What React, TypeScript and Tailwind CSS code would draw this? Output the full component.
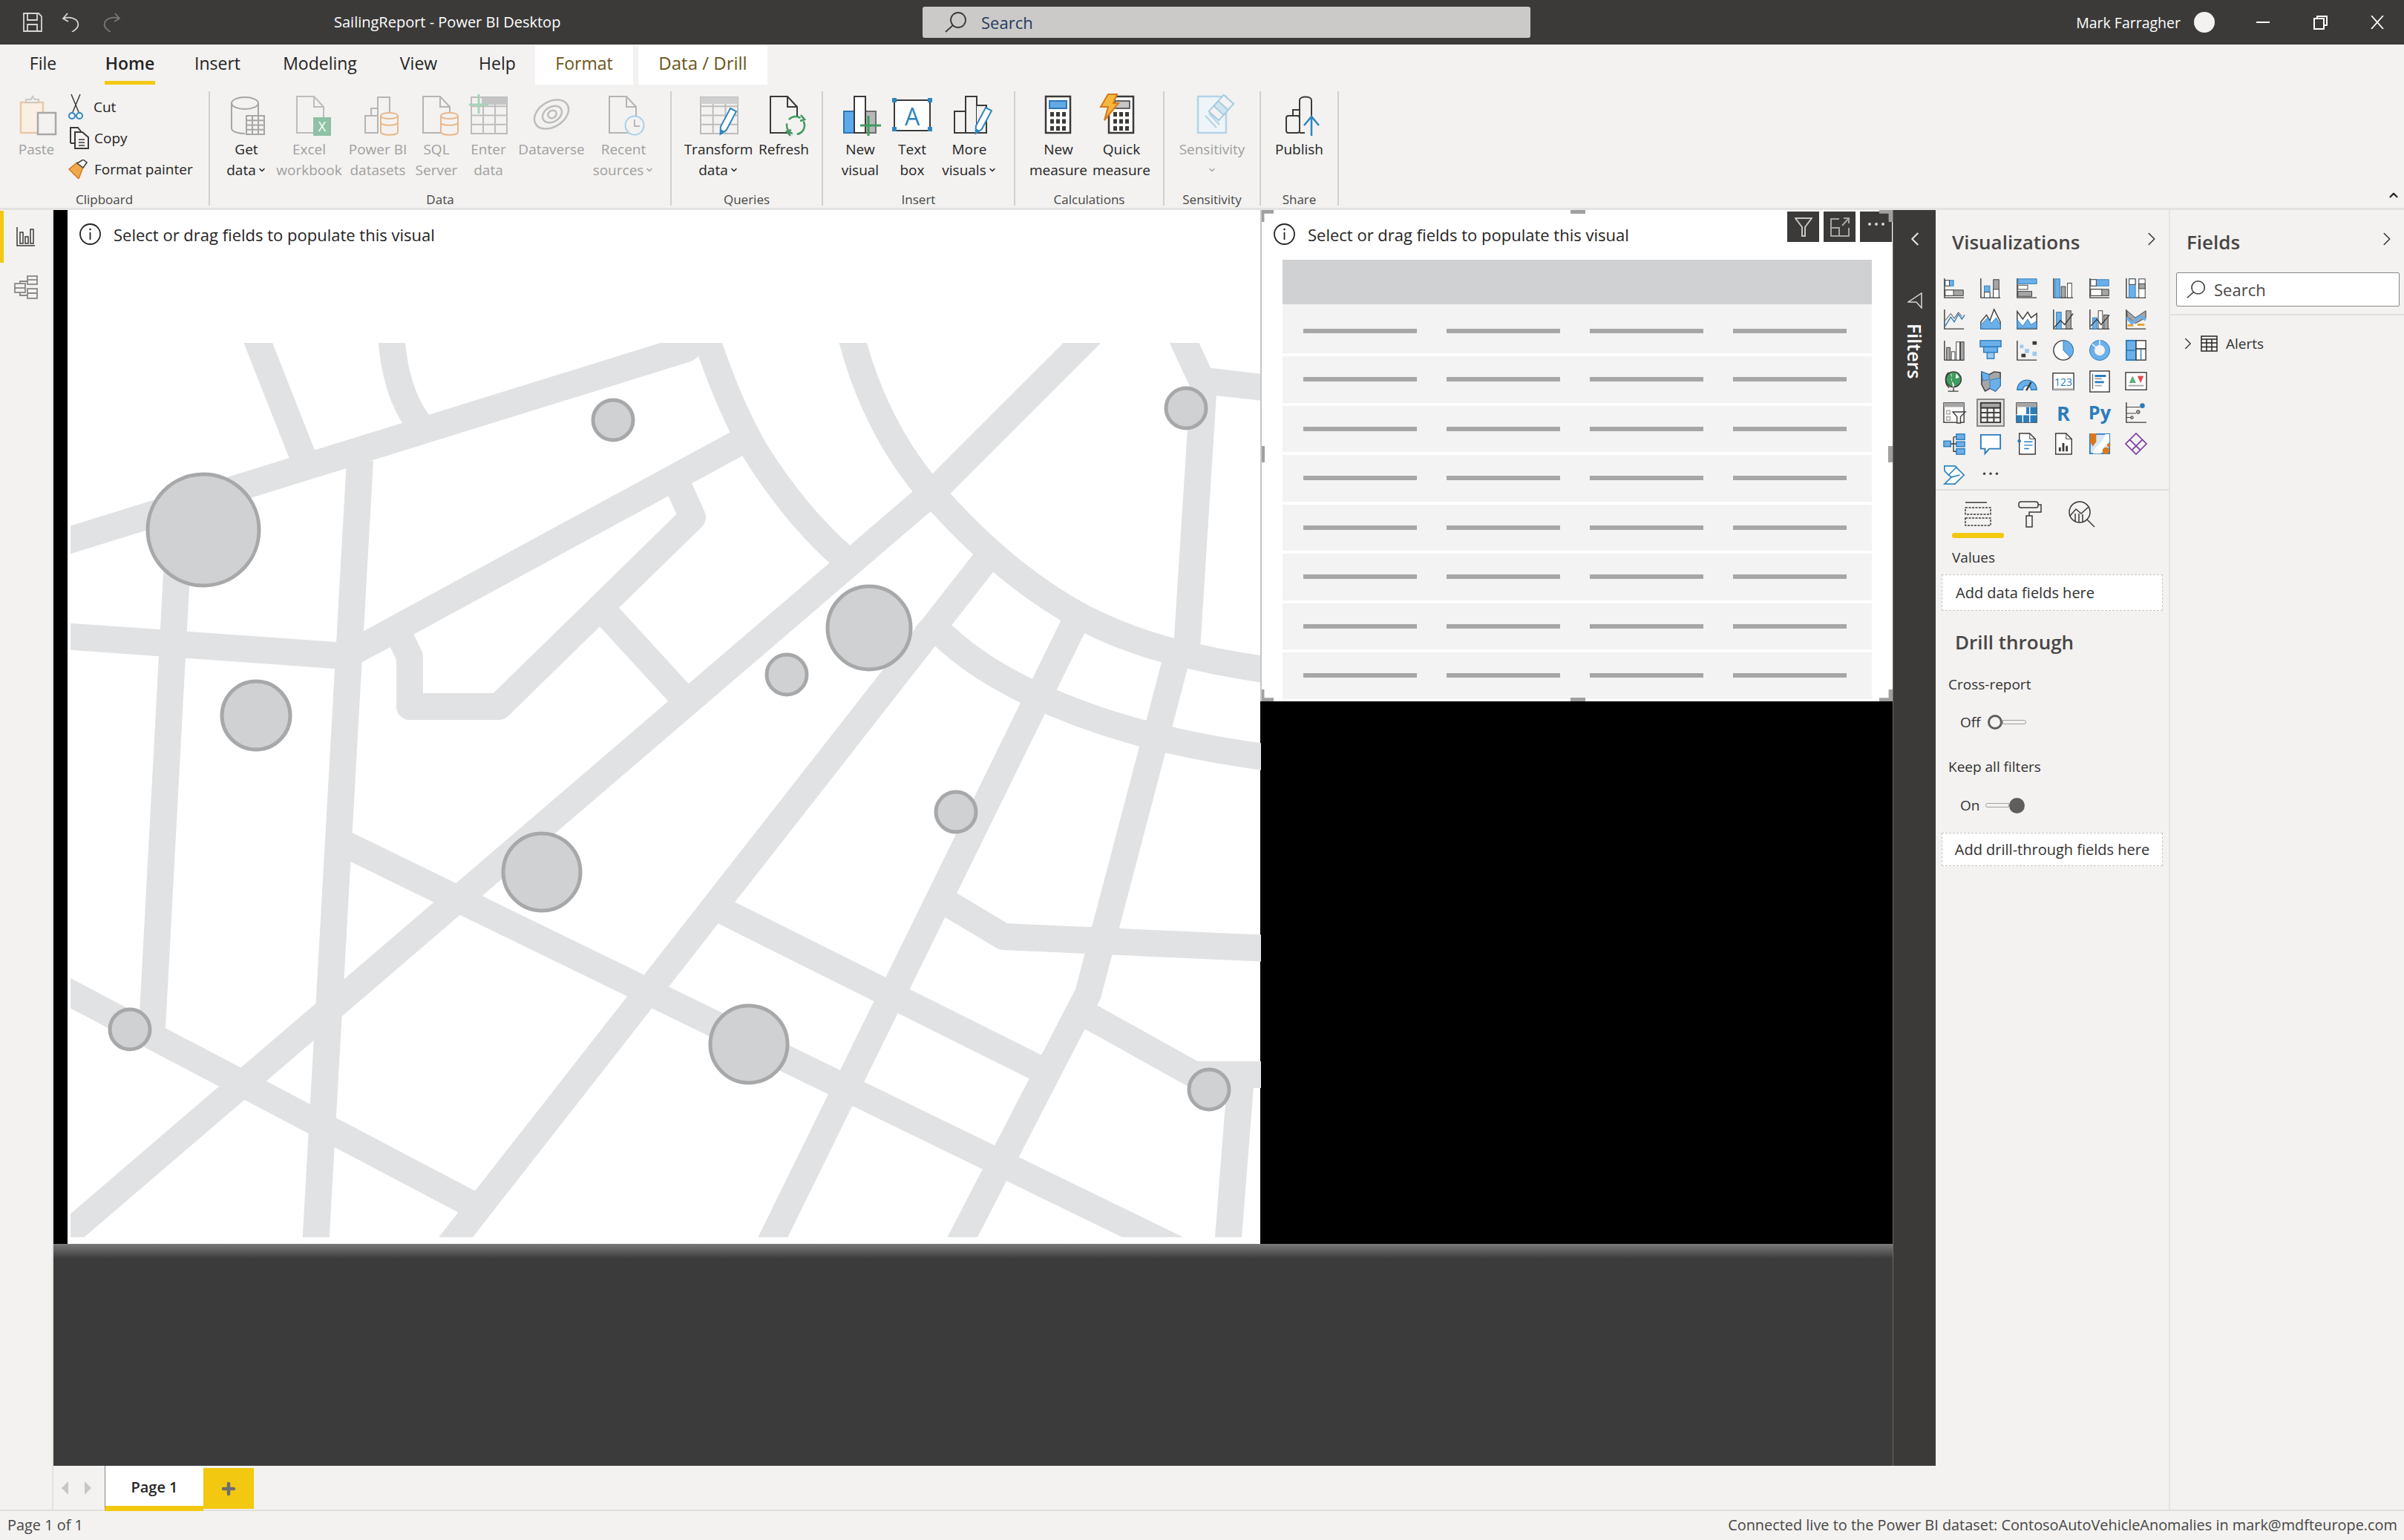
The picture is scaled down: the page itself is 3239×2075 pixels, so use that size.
import type { ReactNode } from 'react'
import { ChevronLeft, ChevronRight, ChevronDown, ChevronUp, Plus } from 'lucide-react'

const FONT = "font-['Open_Sans','Noto_Sans',sans-serif]"

// ---- small shared svg bits ----
function Ico({ children, size = 54 }: { children: ReactNode; size?: number }) {
  return (
    <svg width={size} height={size} viewBox={`0 0 ${size} ${size}`} fill="none" className="overflow-visible shrink-0">
      {children}
    </svg>
  )
}

const page = (x: number) => `M${x} 1H${x + 23}L${x + 36} 15V50H${x}Z M${x + 23} 1V15H${x + 36}`

function Cyl({ x, y, w, h, c }: { x: number; y: number; w: number; h: number; c: string }) {
  return (
    <g stroke={c} strokeWidth="2" fill="#f3f2f1">
      <path d={`M${x} ${y + 4}V${y + h - 4}C${x} ${y + h + 1} ${x + w} ${y + h + 1} ${x + w} ${y + h - 4}V${y + 4}`} />
      <ellipse cx={x + w / 2} cy={y + 4} rx={w / 2} ry="4" />
      <path d={`M${x} ${y + h / 2 - 2}C${x} ${y + h / 2 + 3} ${x + w} ${y + h / 2 + 3} ${x + w} ${y + h / 2 - 2}`} fill="none" />
    </g>
  )
}

function TableGrid({ x, y, w, h, c, cols = 3, rows = 4 }: { x: number; y: number; w: number; h: number; c: string; cols?: number; rows?: number }) {
  const vs = Array.from({ length: cols - 1 }, (_, i) => x + ((i + 1) * w) / cols)
  const hs = Array.from({ length: rows - 1 }, (_, i) => y + ((i + 1) * h) / rows)
  return (
    <g stroke={c} strokeWidth="2">
      <rect x={x} y={y} width={w} height={h} fill="#f3f2f1" />
      {vs.map((v) => (
        <path key={v} d={`M${v} ${y}V${y + h}`} />
      ))}
      {hs.map((v) => (
        <path key={v} d={`M${x} ${v}H${x + w}`} />
      ))}
    </g>
  )
}

function Calc({ x, c = '#3b3a39' }: { x: number; c?: string }) {
  const dots = []
  for (let r = 0; r < 3; r++) for (let k = 0; k < 3; k++) dots.push(<rect key={`${r}${k}`} x={x + 6 + k * 8} y={22 + r * 9.5} width="5" height="6" fill={c} />)
  return (
    <g>
      <rect x={x} y="1" width="33" height="49" fill="#fff" stroke={c} strokeWidth="2.5" />
      {dots}
    </g>
  )
}

const pencil = (x: number, y: number) => (
  <g transform={`translate(${x} ${y}) rotate(28)`}>
    <path d="M0 0H9V28L4.500 37L0 28Z" fill="#fff" stroke="#2e86c1" strokeWidth="2" />
    <path d="M4.500 37L1.500 31H7.500Z" fill="#2e86c1" />
  </g>
)

// ---- ribbon icons, each in a 54px box under its label ----
const ribbonIcons: Record<string, ReactNode> = {
  paste: (
    <Ico>
      <path d="M6 9H36V50H6Z" fill="#f9efe4" stroke="#e9c9a4" strokeWidth="2.500" />
      <path d="M13 9V5H20L22 1L25 5H30V9Z" fill="#f3f2f1" stroke="#cfc8c0" strokeWidth="2" />
      <rect x="29" y="23" width="24" height="29" fill="#f3f2f1" stroke="#a8a8a8" strokeWidth="2.500" />
    </Ico>
  ),
  getdata: (
    <Ico>
      <g stroke="#a6a6a6" strokeWidth="2">
        <path d="M7 10V44C7 48 15 51 25 51" />
        <path d="M43 10V26" />
        <ellipse cx="25" cy="10" rx="18" ry="8" fill="#f3f2f1" />
      </g>
      <TableGrid x={27} y={27} w={24} h={25} c="#a6a6a6" cols={3} rows={4} />
    </Ico>
  ),
  excel: (
    <Ico>
      <path d={page(10)} stroke="#bdbdbd" strokeWidth="2" fill="#f3f2f1" />
      <rect x="32" y="29" width="24" height="25" fill="#8ec1a6" />
      <text x="44" y="48" fill="#fff" fontSize="18" textAnchor="middle" fontFamily="Open Sans">X</text>
    </Ico>
  ),
  pbi: (
    <Ico>
      <g stroke="#b5b5b5" strokeWidth="2" fill="#f3f2f1">
        <path d="M27 30V2H43V30" />
        <path d="M18 27V17H27" />
        <rect x="10" y="27" width="17" height="23" />
      </g>
      <Cyl x={31} y={23} w={23} h={30} c="#eab88a" />
    </Ico>
  ),
  sql: (
    <Ico>
      <path d={page(9)} stroke="#b5b5b5" strokeWidth="2" fill="#f3f2f1" />
      <Cyl x={33} y={23} w={23} h={30} c="#eab88a" />
    </Ico>
  ),
  enter: (
    <Ico>
      <TableGrid x={4} y={2} w={48} h={49} c="#bdbdbd" cols={3} rows={4} />
      <rect x="18" y="2" width="34" height="10" fill="#c4c4c4" />
      <path d="M14 -2V24M1 12H27" stroke="#a5d3b8" strokeWidth="3" />
    </Ico>
  ),
  dataverse: (
    <Ico>
      <g stroke="#bdbdbd" strokeWidth="2.500">
        <ellipse cx="27" cy="25" rx="25" ry="17" transform="rotate(-32 27 25)" />
        <ellipse cx="28" cy="25" rx="14" ry="10" transform="rotate(-32 28 25)" />
        <ellipse cx="28" cy="25" rx="6" ry="5" transform="rotate(-32 28 25)" />
      </g>
    </Ico>
  ),
  recent: (
    <Ico>
      <path d={page(8)} stroke="#b5b5b5" strokeWidth="2" fill="#f3f2f1" />
      <circle cx="42" cy="40" r="12.500" stroke="#a9cfe9" strokeWidth="2" fill="#f3f2f1" />
      <path d="M42 32V41H49" stroke="#a6a6a6" strokeWidth="1.500" />
    </Ico>
  ),
  transform: (
    <Ico>
      <TableGrid x={3} y={2} w={50} h={49} c="#bdbdbd" cols={3} rows={4} />
      <rect x="3" y="2" width="50" height="9" fill="#cfcfcf" />
      {pencil(43, 17)}
    </Ico>
  ),
  refresh: (
    <Ico>
      <path d={page(9)} stroke="#3b3a39" strokeWidth="2" fill="#f3f2f1" />
      <g stroke="#3f9b5f" strokeWidth="2.500">
        <circle cx="43" cy="40" r="12" fill="#f3f2f1" strokeDasharray="17 6" />
        <path d="M50 26L55 32L49 34" />
        <path d="M36 54L31 48L37 46" />
      </g>
    </Ico>
  ),
  newvisual: (
    <Ico>
      <rect x="20" y="21" width="28" height="29" fill="#b8b8b8" stroke="#6d6d6d" strokeWidth="2" />
      <rect x="5" y="21" width="14" height="29" fill="#5ea8ec" stroke="#2e75b6" strokeWidth="2" />
      <rect x="19" y="1" width="15" height="49" fill="#fff" stroke="#3b3a39" strokeWidth="2" />
      <path d="M38 27V54M27 40H55" stroke="#3f9b5f" strokeWidth="3" />
    </Ico>
  ),
  textbox: (
    <Ico>
      <rect x="3" y="6" width="48" height="41" fill="#fff" stroke="#3b3a39" strokeWidth="2" />
      {[[0, 3], [48, 3], [0, 42], [48, 42]].map(([x, y]) => (
        <rect key={`${x}${y}`} x={x} y={y} width="6" height="6" fill="#2e86c1" />
      ))}
      <text x="27" y="40" fill="#2e86c1" fontSize="32" textAnchor="middle" fontFamily="Open Sans">A</text>
    </Ico>
  ),
  morevisuals: (
    <Ico>
      <g stroke="#3b3a39" strokeWidth="2" fill="#f3f2f1">
        <rect x="7" y="21" width="15" height="29" />
        <rect x="22" y="1" width="15" height="49" />
        <path d="M37 13H50V50H37" />
      </g>
      {pencil(49, 16)}
    </Ico>
  ),
  newmeasure: (
    <Ico>
      <Calc x={10} />
      <rect x="15" y="7" width="23" height="10" fill="#62a9e6" stroke="#2e75b6" strokeWidth="2" />
    </Ico>
  ),
  quick: (
    <Ico>
      <Calc x={10} />
      <rect x="18" y="7" width="20" height="10" fill="#c6c6c6" stroke="#3b3a39" strokeWidth="1.500" />
      <path d="M9 -2H21L16 10H23L4 33L9 15H-1Z" fill="#f6b73c" stroke="#d9791c" strokeWidth="2" />
    </Ico>
  ),
  sensitivity: (
    <Ico>
      <path d="M8 1H46V50H8Z" fill="#eef4f8" stroke="#b5d3e6" strokeWidth="2.500" />
      <g transform="rotate(42 34 22)" stroke="#a6cde2" strokeWidth="2" fill="#cfe5f1">
        <rect x="25" y="-1" width="18" height="30" fill="#f3f2f1" />
        <rect x="25" y="10" width="18" height="9" />
      </g>
      <path d="M18 27L33 43M23 24L37 39" stroke="#b5d3e6" strokeWidth="2" />
    </Ico>
  ),
  publish: (
    <Ico>
      <g stroke="#3b3a39" strokeWidth="2" fill="#f3f2f1">
        <path d="M27 30V6C27 0 43 0 43 6V30" />
        <path d="M18 27V19H27" />
        <rect x="9" y="27" width="18" height="23" rx="3" />
        <path d="M27 50H34" />
      </g>
      <path d="M43 54V29M33 40L43 28L53 40" stroke="#2e86c1" strokeWidth="2.500" fill="none" />
    </Ico>
  ),
}

function RibbonBtn({ w, icon, lines, disabled, drop }: { w: number; icon: string; lines: string[]; disabled?: boolean; drop?: boolean }) {
  return (
    <div style={{ width: w }} className={`flex flex-col items-center pt-[6px] text-[19px] leading-[28px] ${disabled ? 'text-[#a19f9d]' : 'text-[#252423]'}`}>
      <div className="mb-[4px] h-[54px]">{ribbonIcons[icon]}</div>
      {lines.map((l, i) => (
        <div key={l + i} className="flex items-center whitespace-nowrap">
          {l}
          {drop && i === lines.length - 1 && <ChevronDown className="ml-[2px]" size={12} strokeWidth={3} />}
        </div>
      ))}
    </div>
  )
}

function Group({ w, pl = 0, label, children }: { w: number; pl?: number; label: string; children: ReactNode }) {
  return (
    <div style={{ width: w }} className="relative flex h-[154px] flex-col border-r-2 border-[#d2d0ce]">
      <div style={{ paddingLeft: pl }} className="flex h-[130px]">
        {children}
      </div>
      <div className="h-[24px] pt-[5px] text-center text-[17px] leading-[22px] text-[#484644]">{label}</div>
    </div>
  )
}

function Ribbon() {
  return (
    <div className="relative h-[223px] border-b-[3px] border-[#e4e3e2] bg-[#f3f2f1]">
      <div className="flex h-[54px] text-[23px] text-[#252423]">
        <div className="ml-[8px] flex w-[100px] items-center justify-center pb-[4px]">File</div>
        <div className="relative flex w-[134px] items-center justify-center pb-[4px] font-semibold">
          Home
          <span className="absolute bottom-0 left-[33px] h-[5px] w-[68px] bg-[#f2c811]" />
        </div>
        <div className="flex w-[102px] items-center justify-center pb-[4px]">Insert</div>
        <div className="flex w-[174px] items-center justify-center pb-[4px]">Modeling</div>
        <div className="flex w-[92px] items-center justify-center pb-[4px]">View</div>
        <div className="ml-[10px] flex w-[100px] items-center justify-center pb-[4px]">Help</div>
        <div className="ml-[1px] flex w-[132px] items-center justify-center bg-white pb-[4px] text-[#6b5518]">Format</div>
        <div className="ml-[7px] flex w-[174px] items-center justify-center bg-white pb-[4px] text-[24px] text-[#6b5518]">Data / Drill</div>
      </div>
      <div className="mt-[9px] flex">
        <Group w={283} label="Clipboard">
          <div className="w-[88px]">
            <RibbonBtn w={98} icon="paste" lines={['Paste']} disabled />
          </div>
          <div className="ml-[4px] flex flex-col text-[19px] text-[#252423]">
            <div className="flex h-[42px] items-center gap-[14px]">
              <svg width="20" height="36" viewBox="0 0 20 36" fill="none" className="shrink-0">
                <path d="M4 1L14 25M16 1L6 25" stroke="#3b3a39" strokeWidth="1.500" />
                <circle cx="5" cy="30" r="4" stroke="#2e86c1" strokeWidth="2" />
                <circle cx="15" cy="30" r="4" stroke="#2e86c1" strokeWidth="2" />
              </svg>
              Cut
            </div>
            <div className="flex h-[42px] items-center gap-[7px]">
              <svg width="28" height="30" viewBox="0 0 28 30" fill="none" className="shrink-0">
                <path d="M3 22V1H13L17 6M3 22H8" stroke="#3b3a39" strokeWidth="2" />
                <path d="M9 7H19L27 14V29H9Z" fill="#f3f2f1" stroke="#3b3a39" strokeWidth="2" />
                <path d="M14 17H22M14 21H22M14 25H22" stroke="#3b3a39" strokeWidth="1.500" />
              </svg>
              Copy
            </div>
            <div className="flex h-[42px] items-center gap-[9px]">
              <svg width="26" height="26" viewBox="0 0 26 26" fill="none" className="shrink-0">
                <path d="M1 13L14 26L20 10L12 4Z" fill="#f0a94c" stroke="#d9791c" strokeWidth="1.500" />
                <path d="M12 5L20 11L25 4L20 0Z" fill="#fff" stroke="#3b3a39" strokeWidth="1.500" />
              </svg>
              Format painter
            </div>
          </div>
        </Group>
        <Group w={622} pl={7} label="Data">
          <RibbonBtn w={84} icon="getdata" lines={['Get', 'data']} drop />
          <RibbonBtn w={85} icon="excel" lines={['Excel', 'workbook']} disabled />
          <RibbonBtn w={100} icon="pbi" lines={['Power BI', 'datasets']} disabled />
          <RibbonBtn w={58} icon="sql" lines={['SQL', 'Server']} disabled />
          <RibbonBtn w={82} icon="enter" lines={['Enter', 'data']} disabled />
          <RibbonBtn w={88} icon="dataverse" lines={['Dataverse']} disabled />
          <RibbonBtn w={106} icon="recent" lines={['Recent', 'sources']} disabled drop />
        </Group>
        <Group w={204} pl={16} label="Queries">
          <RibbonBtn w={94} icon="transform" lines={['Transform', 'data']} drop />
          <RibbonBtn w={82} icon="refresh" lines={['Refresh']} />
        </Group>
        <Group w={259} pl={15} label="Insert">
          <RibbonBtn w={70} icon="newvisual" lines={['New', 'visual']} />
          <RibbonBtn w={70} icon="textbox" lines={['Text', 'box']} />
          <RibbonBtn w={84} icon="morevisuals" lines={['More', 'visuals']} drop />
        </Group>
        <Group w={201} pl={16} label="Calculations">
          <RibbonBtn w={84} icon="newmeasure" lines={['New', 'measure']} />
          <RibbonBtn w={86} icon="quick" lines={['Quick', 'measure']} />
        </Group>
        <Group w={130} label="Sensitivity">
          <div className="flex w-[128px] flex-col items-center">
            <RibbonBtn w={128} icon="sensitivity" lines={['Sensitivity']} disabled />
            <ChevronDown className="mt-[8px] text-[#a19f9d]" size={12} strokeWidth={2.5} />
          </div>
        </Group>
        <Group w={105} label="Share">
          <RibbonBtn w={103} icon="publish" lines={['Publish']} />
        </Group>
      </div>
      <ChevronUp className="absolute bottom-[8px] right-[5px] text-[#252423]" size={18} strokeWidth={3} />
    </div>
  )
}

function TitleBar() {
  return (
    <div className="flex h-[60px] items-center bg-[#3b3a39] text-white">
      <div className="flex w-[450px] items-center pl-[31px]">
        <svg width="26" height="26" viewBox="0 0 26 26" fill="none" stroke="#d6d6d6" strokeWidth="1.800">
          <path d="M1 1H21L25 5V25H1Z M6 1V10H19V1 M6 25V16H19V25" />
        </svg>
        <svg className="ml-[26px]" width="26" height="26" viewBox="0 0 26 26" fill="none" stroke="#d6d6d6" strokeWidth="1.800">
          <path d="M8 1L2 8L9 12 M2 8C14 4 24 10 22 18C21 22 17 24 14 26" />
        </svg>
        <svg className="ml-[28px]" width="26" height="26" viewBox="0 0 26 26" fill="none" stroke="#7a7978" strokeWidth="1.800">
          <path d="M18 1L24 8L17 12 M24 8C12 4 2 10 4 18C5 22 9 24 12 26" />
        </svg>
      </div>
      <div className="w-[793px] text-[20px]">SailingReport - Power BI Desktop</div>
      <div className="flex h-[42px] w-[819px] items-center rounded-[3px] bg-[#cbcac9] pl-[30px] text-[22px] text-[#243a5e]">
        <svg width="30" height="28" viewBox="0 0 30 28" fill="none" stroke="#3b3a39" strokeWidth="1.800">
          <circle cx="18" cy="11" r="10" />
          <path d="M11 18L1 27" />
        </svg>
        <span className="ml-[19px]">Search</span>
      </div>
      <div className="flex-1" />
      <div className="pt-[2px] text-[19.500px]">Mark Farragher</div>
      <div className="ml-[18px] size-[28px] rounded-full bg-[#f3f2f1]" />
      <div className="ml-[56px] h-[2px] w-[18px] bg-white" />
      <svg className="ml-[59px]" width="19" height="19" viewBox="0 0 19 19" fill="none" stroke="#fff" strokeWidth="2">
        <path d="M5 4V1H18V13H14" />
        <rect x="1" y="4" width="13" height="14" />
      </svg>
      <svg className="ml-[58px] mr-[27px]" width="18" height="18" viewBox="0 0 18 18" fill="none" stroke="#fff" strokeWidth="1.800">
        <path d="M1 0L17 18M17 0L1 18" />
      </svg>
    </div>
  )
}

// ---- map placeholder ----
const roads = [
  'M80 732L925 470L950 450',
  'M460 887L1000 594',
  'M85 857L480 885',
  'M243 680L205 1385',
  'M485 620L425 1680',
  'M540 860L552 885V952H672L933 697L912 650',
  'M815 825L925 945',
  'M80 1672L1260 660L1470 450',
  'M1330 752L600 1685',
  'M460 1135L1590 1685',
  'M975 1228L1410 1445',
  'M85 1333L640 1625',
  'M1455 825L1035 1680',
  'M1590 868L1466 1339L1290 1680',
  'M1622 515L1598 890',
  'M1590 450L1625 525',
  'M1622 513L1710 523',
  'M1265 1210L1352 1262L1710 1278',
  'M1460 1365L1609 1448H1710',
  'M1672 1450L1654 1680',
  'M343 450L412 625',
  'M527 450C530 500 542 545 570 578',
  'M950 450C968 505 990 560 1017 607C1050 660 1090 710 1135 750',
  'M1146 450C1170 545 1215 625 1269 679C1320 735 1375 783 1439 821C1480 845 1525 863 1573 876C1620 888 1665 897 1710 903',
  'M1245 832L1274 859C1310 892 1345 912 1385 932C1440 958 1490 975 1539 988C1595 1003 1650 1013 1710 1021',
]

const bubbles = [
  [274, 714, 75],
  [826, 566, 27],
  [345, 964, 46],
  [1598, 550, 27],
  [1171, 846, 56],
  [1060, 909, 27],
  [1288, 1094, 27],
  [730, 1175, 52],
  [175, 1387, 27],
  [1009, 1407, 52],
  [1629, 1468, 27],
]

function MapArt() {
  return (
    <svg width="1604" height="1205" viewBox="95 462 1604 1205" fill="none" className="block">
      {roads.map((d) => (
        <path key={d} d={d} stroke="#e1e2e4" strokeWidth="36" strokeLinejoin="round" />
      ))}
      {bubbles.map(([x, y, r]) => (
        <circle key={`${x}${y}`} cx={x} cy={y} r={r} fill="#d0d1d3" stroke="#a7a8aa" strokeWidth="5" />
      ))}
    </svg>
  )
}

function VisualHint() {
  return (
    <div className="flex items-center gap-[17px] text-[22px] leading-[29px] text-[#252423]">
      <svg width="29" height="29" viewBox="0 0 29 29" fill="none">
        <circle cx="14.500" cy="14.500" r="13.500" stroke="#252423" strokeWidth="1.800" />
        <path d="M14.500 12V22" stroke="#252423" strokeWidth="1.800" />
        <circle cx="14.500" cy="8" r="1.300" fill="#252423" />
      </svg>
      <span className="pt-[3px]">Select or drag fields to populate this visual</span>
    </div>
  )
}

function ToolBtn({ children }: { children: ReactNode }) {
  return <div className="flex h-[41px] w-[43px] items-center justify-center bg-[#3b3a39]">{children}</div>
}

function Handle({ className }: { className: string }) {
  return <div className={`absolute bg-[#a0a0a0] ${className}`} />
}

function Canvas() {
  const rows = [66, 62.5, 62.5, 62.5, 62.5, 62.5, 62.5, 62.5]
  return (
    <div className="flex h-[1393px] bg-black pl-[19px]">
      <div className="w-[1607px] bg-white">
        <div className="flex h-[179px] items-start pl-[16px] pt-[16px]">
          <VisualHint />
        </div>
        <div className="ml-[4px]">
          <MapArt />
        </div>
      </div>
      <div className="w-[852px]">
        <div className="relative h-[662px] overflow-hidden border-l-2 border-[#c8c6c4] bg-white">
          <div className="flex h-[67px] items-start pl-[16px] pt-[16px]">
            <VisualHint />
          </div>
          <div className="mx-[28px] h-[60px] bg-[#d0d1d3]" />
          <div className="mx-[28px] flex flex-col gap-[4px]">
            {rows.map((h, i) => (
              <div key={i} style={{ height: h, paddingTop: i === 0 ? 5 : 0 }} className="flex items-center gap-[40px] bg-[#f3f3f3] pl-[28px]">
                <div className="h-[6px] w-[153px] bg-[#a6a6a6]" />
                <div className="h-[6px] w-[153px] bg-[#a6a6a6]" />
                <div className="h-[6px] w-[153px] bg-[#a6a6a6]" />
                <div className="h-[6px] w-[153px] bg-[#a6a6a6]" />
              </div>
            ))}
          </div>
          <div className="absolute right-[1px] top-[2px] flex gap-[6px]">
            <ToolBtn>
              <svg width="24" height="26" viewBox="0 0 24 26" fill="none" stroke="#c8c6c4" strokeWidth="2">
                <path d="M1 1H23L14 13V25H10V13Z" />
              </svg>
            </ToolBtn>
            <ToolBtn>
              <svg width="26" height="26" viewBox="0 0 26 26" fill="none" stroke="#a6a6a6" strokeWidth="2">
                <path d="M12 2H1V25H25V14M1 14H12V25M16 11L25 1M18 1H25V8" />
              </svg>
            </ToolBtn>
            <ToolBtn>
              <div className="flex gap-[5px] pb-[8px]">
                <div className="size-[4px] rounded-full bg-[#d6d6d6]" />
                <div className="size-[4px] rounded-full bg-[#d6d6d6]" />
                <div className="size-[4px] rounded-full bg-[#d6d6d6]" />
              </div>
            </ToolBtn>
          </div>
          <Handle className="left-[-2px] top-0 h-[16px] w-[18px] [clip-path:polygon(0_0,100%_0,100%_30%,30%_30%,30%_100%,0_100%)]" />
          <Handle className="left-[416px] top-0 h-[5px] w-[20px]" />
          <Handle className="left-[-2px] top-[318px] h-[22px] w-[6px]" />
          <Handle className="right-0 top-[318px] h-[22px] w-[6px]" />
          <Handle className="right-0 top-0 h-[16px] w-[18px] [clip-path:polygon(0_0,100%_0,100%_100%,70%_100%,70%_30%,0_30%)]" />
          <Handle className="bottom-0 left-[416px] h-[5px] w-[20px]" />
          <Handle className="bottom-0 left-[-2px] h-[16px] w-[18px] [clip-path:polygon(0_0,30%_0,30%_70%,100%_70%,100%_100%,0_100%)]" />
          <Handle className="bottom-0 right-0 h-[16px] w-[18px] [clip-path:polygon(70%_0,100%_0,100%_100%,0_100%,0_70%,70%_70%)]" />
        </div>
      </div>
    </div>
  )
}

// ---- visualization gallery ----
const D = '#3b3a39'
const B = '#6cb0ea'
const B2 = '#2b7cba'
const G = '#a6a6a6'

function VizAxis() {
  return <path d="M2 2V30H30" stroke={D} strokeWidth="1.500" fill="none" />
}

const vizIcons: ReactNode[] = [
  <g key="a"><VizAxis /><rect x="3" y="5" width="12" height="8" fill={B} stroke={B2} /><rect x="3" y="5" width="6" height="8" fill="#fff" stroke={D} /><rect x="3" y="19" width="26" height="8" fill={G} stroke={D} /><rect x="3" y="19" width="12" height="8" fill="#fff" stroke={D} /></g>,
  <g key="b"><VizAxis /><rect x="7" y="13" width="8" height="17" fill={B} stroke={B2} /><rect x="20" y="4" width="8" height="26" fill={G} stroke={D} /><rect x="20" y="18" width="8" height="12" fill="#fff" stroke={D} /><rect x="7" y="22" width="8" height="8" fill="#fff" stroke={D} /></g>,
  <g key="c"><VizAxis /><rect x="3" y="3" width="27" height="7" fill={B} stroke={B2} /><rect x="3" y="12" width="14" height="6" fill="#fff" stroke={D} /><rect x="3" y="21" width="20" height="7" fill={G} stroke={D} /></g>,
  <g key="d"><VizAxis /><rect x="4" y="3" width="7" height="27" fill={B} stroke={B2} /><rect x="13" y="14" width="6" height="16" fill={G} stroke={D} /><rect x="22" y="9" width="6" height="21" fill="#fff" stroke={D} /></g>,
  <g key="e"><VizAxis /><rect x="3" y="4" width="26" height="9" fill={B} stroke={B2} /><rect x="3" y="4" width="8" height="9" fill="#fff" stroke={D} /><rect x="3" y="18" width="26" height="9" fill={G} stroke={D} /><rect x="3" y="18" width="16" height="9" fill="#fff" stroke={D} /></g>,
  <g key="f"><VizAxis /><rect x="6" y="3" width="9" height="27" fill={B} stroke={B2} /><rect x="6" y="3" width="9" height="8" fill="#fff" stroke={D} /><rect x="20" y="3" width="9" height="27" fill="#fff" stroke={D} /><rect x="20" y="10" width="9" height="7" fill={G} stroke={D} /></g>,

  <g key="g"><VizAxis /><path d="M3 26L11 13L16 20L22 9L27 16L31 10" stroke={B2} strokeWidth="1.500" fill="none" /><path d="M3 18L11 8L16 15L22 6L27 12" stroke={D} fill="none" /></g>,
  <g key="h"><path d="M2 30V20L10 10L15 18L21 2L30 20V30Z" fill="#fff" stroke={D} strokeWidth="1.500" /><path d="M2 30V24L12 14L17 22L24 14L30 24V30Z" fill={B} stroke={B2} /></g>,
  <g key="i"><path d="M2 30V5L10 16L17 6L22 14L30 8V30Z" fill="#fff" stroke={D} strokeWidth="1.500" /><path d="M2 29V17L10 26L17 16L22 24L30 19V29Z" fill={B} stroke={B2} /></g>,
  <g key="j"><VizAxis /><rect x="6" y="6" width="7" height="24" fill={B} stroke={B2} /><rect x="20" y="4" width="7" height="26" fill={G} stroke={D} /><path d="M3 28L12 18L18 24L30 8" stroke={D} strokeWidth="1.500" fill="none" /></g>,
  <g key="k"><VizAxis /><rect x="6" y="14" width="6" height="16" fill={B} stroke={B2} /><rect x="14" y="4" width="6" height="26" fill="#fff" stroke={D} /><rect x="22" y="10" width="6" height="20" fill={G} stroke={D} /><path d="M3 26L12 16L18 24L30 10" stroke={D} strokeWidth="1.500" fill="none" /></g>,
  <g key="l"><VizAxis /><path d="M3 4L15 14L30 4V14L15 22L3 12Z" fill={G} stroke={D} /><path d="M3 14L10 22L22 12L30 17" stroke={B} strokeWidth="4" fill="none" /><path d="M4 25H12M18 24H28" stroke="#e8a33a" strokeWidth="3" /></g>,

  <g key="m"><VizAxis /><rect x="5" y="12" width="5" height="18" fill={G} stroke={D} /><rect x="12" y="18" width="5" height="12" fill="#fff" stroke={D} /><rect x="19" y="4" width="5" height="26" fill="#fff" stroke={D} /><rect x="25" y="4" width="5" height="26" fill={G} stroke={D} /></g>,
  <g key="n"><rect x="1" y="2" width="30" height="9" fill={B} stroke={B2} strokeWidth="1.500" /><rect x="6" y="11" width="20" height="8" fill={B} stroke={B2} strokeWidth="1.500" /><rect x="11" y="19" width="10" height="9" fill="#9bc8ee" stroke={B2} strokeWidth="1.500" /></g>,
  <g key="o"><VizAxis /><rect x="6" y="8" width="5" height="5" fill="#9bc8ee" /><rect x="13" y="14" width="6" height="6" fill="#9bc8ee" /><rect x="24" y="3" width="6" height="5" fill={D} /><rect x="8" y="21" width="6" height="5" fill={D} /><rect x="24" y="18" width="6" height="6" fill="#9bc8ee" /></g>,
  <g key="p"><circle cx="16" cy="16" r="14" fill="#fff" stroke={D} strokeWidth="1.500" /><path d="M16 16V2A14 14 0 0 1 26 26Z" fill={B} stroke={B2} /></g>,
  <g key="q"><circle cx="16" cy="16" r="11" fill="none" stroke={B} strokeWidth="7" /><circle cx="16" cy="16" r="14.500" fill="none" stroke={B2} strokeWidth="1" /><path d="M16 1V9M5 7L11 12" stroke="#fff" strokeWidth="1.500" /></g>,
  <g key="r"><rect x="2" y="2" width="14" height="28" fill={B} stroke={B2} strokeWidth="2" /><rect x="16" y="2" width="14" height="12" fill="#fff" stroke={D} strokeWidth="1.500" /><rect x="16" y="14" width="14" height="16" fill="#fff" stroke={D} strokeWidth="1.500" /><path d="M2 16H16M23 14V30" stroke={B2} strokeWidth="1.500" /></g>,

  <g key="s"><circle cx="15" cy="13" r="11" fill="#3f9b5f" stroke={D} strokeWidth="1.500" /><path d="M11 4C15 8 9 12 13 16C16 20 18 22 14 24M19 4L23 10L18 12Z" fill="#fff" /><path d="M8 3C2 8 2 20 9 25M7 30H22M15 25V30" stroke={D} strokeWidth="1.500" fill="none" /></g>,
  <g key="t"><path d="M3 2L14 6L21 2L30 3V22L23 30L15 26L8 30L3 20Z" fill={G} stroke={D} strokeWidth="1.500" /><path d="M15 14L30 11V22L23 30L15 26Z" fill={B} stroke={B2} /><path d="M3 2L14 6V13L5 15Z" fill={B} stroke={B2} /></g>,
  <g key="u"><path d="M2 28A14 14 0 0 1 30 28H22A6 6 0 0 0 10 28Z" fill={B} stroke={B2} strokeWidth="1.500" /><path d="M15 29L22 17" stroke={D} strokeWidth="2.500" /></g>,
  <g key="v"><rect x="1" y="4" width="30" height="24" fill="#fff" stroke={D} strokeWidth="1.500" /><rect x="1" y="26" width="30" height="3" fill={G} /><text x="16" y="22" fill={B2} fontSize="15" textAnchor="middle" fontFamily="Open Sans">123</text></g>,
  <g key="w"><rect x="2" y="1" width="28" height="30" fill="#fff" stroke={D} strokeWidth="1.500" /><path d="M6 5V27" stroke={D} /><path d="M9 8H25M9 17H22" stroke={B2} strokeWidth="3" /><path d="M9 12H19M9 22H19" stroke={G} strokeWidth="2" /></g>,
  <g key="x"><rect x="1" y="3" width="30" height="25" fill="#fff" stroke={D} strokeWidth="1.500" /><path d="M6 18L11 8L16 18Z" fill="#5fb27b" /><path d="M18 8H27L22.500 18Z" fill="#e4484f" /><path d="M5 22H27" stroke={G} strokeWidth="2" /></g>,

  <g key="y"><rect x="1" y="2" width="29" height="28" fill="#fff" stroke={D} strokeWidth="1.500" /><rect x="1" y="2" width="29" height="6" fill={G} /><rect x="5" y="13" width="5" height="5" fill="none" stroke={G} strokeWidth="1.500" /><rect x="5" y="22" width="5" height="5" fill="none" stroke={G} strokeWidth="1.500" /><path d="M14 15H32L25 22V31H20V22Z" fill="#fff" stroke={D} strokeWidth="1.500" /></g>,
  <g key="z"><TableGrid x={2} y={2} w={28} h={28} c={D} cols={3} rows={4} /><rect x="2" y="2" width="28" height="7" fill={G} stroke={D} strokeWidth="2" /></g>,
  <g key="aa"><rect x="1" y="2" width="29" height="28" fill="#fff" stroke={D} strokeWidth="1.500" /><rect x="1" y="2" width="29" height="6" fill={G} /><rect x="15" y="8" width="15" height="22" fill={B2} /><rect x="1" y="19" width="29" height="11" fill={B2} /><path d="M10 8V30M20 8V30M1 19H30" stroke="#fff" strokeWidth="1.500" /></g>,
  <text key="ab" x="16" y="28" fill="#2b7cba" fontSize="29" fontWeight="700" textAnchor="middle" fontFamily="Open Sans">R</text>,
  <text key="ac" x="16" y="26" fill="#2b7cba" fontSize="27" fontWeight="700" textAnchor="middle" fontFamily="Open Sans">Py</text>,
  <g key="ad"><path d="M2 1V30H31" stroke={D} strokeWidth="1.500" fill="none" /><path d="M2 8H22M2 17H16" stroke={D} /><path d="M2 23H10" stroke={D} /><circle cx="25" cy="6" r="3.500" fill={B2} /><circle cx="19" cy="15" r="2.500" fill={G} stroke={D} /><circle cx="10" cy="23" r="2" fill={G} stroke={D} /></g>,

  <g key="ae"><rect x="1" y="12" width="10" height="8" fill={B} stroke={B2} strokeWidth="1.500" /><rect x="19" y="2" width="12" height="8" fill={B} stroke={B2} strokeWidth="1.500" /><rect x="19" y="13" width="12" height="7" fill={B} stroke={B2} strokeWidth="1.500" /><rect x="19" y="23" width="12" height="8" fill={B} stroke={B2} strokeWidth="1.500" /><path d="M11 16H19M15 6V27H19M15 6H19" stroke={D} strokeWidth="1.500" fill="none" /></g>,
  <path key="af" d="M2 3H30V23H14L8 30V23H2Z" fill="#fff" stroke={B2} strokeWidth="2" />,
  <g key="ag"><path d="M5 1H20L28 9V31H5Z" fill="#fff" stroke={D} strokeWidth="1.500" /><path d="M20 1V9H28" stroke={D} fill="none" /><circle cx="5" cy="12" r="2.500" fill={B2} /><path d="M12 13H24M12 18H24M12 23H19" stroke={B2} strokeWidth="1.500" /></g>,
  <g key="ah"><path d="M5 1H20L28 9V31H5Z" fill="#fff" stroke={D} strokeWidth="1.500" /><path d="M20 1V9H28" stroke={D} fill="none" /><path d="M11 27V21M16 27V15M21 27V19" stroke={D} strokeWidth="3" /></g>,
  <g key="ai"><path d="M2 2H30V30H2Z" fill="#d7e9f8" stroke={B2} strokeWidth="2" /><path d="M14 18C20 12 22 8 24 2H30V14C24 16 20 22 18 30H6C8 24 10 20 14 18Z" fill="#fff" /><path d="M2 1H11V13L6 20L2 13Z" fill="#d9791c" /><circle cx="25" cy="26" r="5" fill="#d9791c" /><circle cx="29" cy="18" r="2.500" fill="#d9791c" /></g>,
  <g key="aj" fill="none" stroke="#7b3fa0" strokeWidth="1.800"><path d="M16 1L25 10L16 19L7 10Z" /><path d="M7 10L1 16L16 31L31 16L25 10" /><path d="M16 19L22 25M16 19L10 25" /></g>,

  <g key="ak" fill="#fff" stroke="#2e86c1" strokeWidth="1.800"><path d="M2 3H17L30 16L17 29H2L12 19L8 16L2 10Z" /><path d="M12 19L24 16M8 16L20 4" /></g>,
  <g key="al" fill={D}><circle cx="7" cy="14" r="1.800" /><circle cx="16" cy="14" r="1.800" /><circle cx="25" cy="14" r="1.800" /></g>,
]

function SidePane({ title, w, children }: { title: string; w: number; children: ReactNode }) {
  return (
    <div style={{ width: w }} className="flex h-full shrink-0 flex-col border-r-2 border-[#e5e3e1] bg-[#f3f2f1]">
      <div className="flex h-[84px] items-center justify-between pl-[22px] pr-[8px] pt-[2px] font-semibold text-[#484644]">
        <span className="text-[26px]">{title}</span>
        <ChevronRight size={30} strokeWidth={1.3} className="mb-[8px] text-[#3b3a39]" />
      </div>
      {children}
    </div>
  )
}

function DropBox({ text, h, center }: { text: string; h: number; center?: boolean }) {
  return (
    <div style={{ height: h }} className={`mx-[8px] flex items-center border border-dashed border-[#c8c6c4] bg-white text-[20px] text-[#323130] ${center ? 'justify-center' : 'pl-[18px]'}`}>
      {text}
    </div>
  )
}

function VisualizationsPane() {
  return (
    <SidePane title="Visualizations" w={316}>
      <div className="grid h-[294px] grid-cols-[repeat(6,49px)] grid-rows-[repeat(7,42px)] border-b-2 border-[#e1dfdd]">
        {vizIcons.map((icon, i) => (
          <div key={i} className="flex items-center justify-center">
            <div className={i === 25 ? 'flex size-[38px] items-center justify-center border-2 border-[#8a8886] bg-[#e1dfdd]' : ''}>
              <svg width="30" height="30" viewBox="0 0 32 32" className="overflow-visible">
                {icon}
              </svg>
            </div>
          </div>
        ))}
      </div>
      <div className="flex h-[57px] items-center gap-[36px] pl-[39px] pt-[6px]">
        <svg width="36" height="36" viewBox="0 0 36 36" fill="none" stroke="#3b3a39" strokeWidth="1.500">
          <path d="M1 2H30" />
          <path d="M1 9H35V18H1Z M1 23H35V33H1Z" strokeDasharray="3 1.500" />
        </svg>
        <svg width="32" height="36" viewBox="0 0 32 36" fill="none" stroke="#3b3a39" strokeWidth="1.500">
          <rect x="1" y="1" width="26" height="8" rx="3" />
          <path d="M27 5H31V15H15V20" />
          <rect x="11" y="20" width="8" height="15" />
        </svg>
        <svg width="36" height="36" viewBox="0 0 36 36" fill="none" stroke="#3b3a39" strokeWidth="1.500">
          <circle cx="15" cy="15" r="14" />
          <path d="M25 25L35 35M2 20L10 11L17 17L27 8M9 17V28M14 17V29M19 18V29" />
        </svg>
      </div>
      <div className="ml-[22px] h-[7px] w-[70px] rounded-[3px] bg-[#f2c811]" />
      <div className="mt-[14px] pl-[22px] text-[19px] leading-[24px] text-[#323130]">Values</div>
      <div className="mt-[11px]">
        <DropBox text="Add data fields here" h={49} />
      </div>
      <div className="mt-[26px] pl-[26px] text-[26px] font-semibold leading-[32px] text-[#484644]">Drill through</div>
      <div className="mt-[29px] pl-[17px] text-[19px] leading-[24px] text-[#323130]">Cross-report</div>
      <div className="mt-[27px] flex h-[24px] items-center pl-[33px] text-[19px] text-[#323130]">
        <span className="w-[37px]">Off</span>
        <span className="size-[20px] rounded-full border-[3px] border-[#605e5c]" />
        <span className="h-[6px] w-[32px] rounded-r border border-[#a19f9d]" />
      </div>
      <div className="mt-[36px] pl-[17px] text-[19px] leading-[24px] text-[#323130]">Keep all filters</div>
      <div className="mt-[28px] flex h-[24px] items-center pl-[33px] text-[19px] text-[#323130]">
        <span className="w-[34px]">On</span>
        <span className="h-[6px] w-[32px] rounded-l border border-[#a19f9d]" />
        <span className="size-[21px] rounded-full bg-[#605e5c]" />
      </div>
      <div className="mt-[25px]">
        <DropBox text="Add drill-through fields here" h={45} center />
      </div>
    </SidePane>
  )
}

function FieldsPane() {
  return (
    <div className="flex h-full flex-1 flex-col bg-[#f3f2f1]">
      <div className="flex h-[84px] items-center justify-between pl-[22px] pr-[8px] pt-[2px] font-semibold text-[#484644]">
        <span className="text-[26px]">Fields</span>
        <ChevronRight size={30} strokeWidth={1.3} className="mb-[8px] text-[#3b3a39]" />
      </div>
      <div className="ml-[8px] mr-[6px] flex h-[46px] items-center rounded-[2px] border border-[#8a8886] bg-white pl-[13px] text-[22px] text-[#484644]">
        <svg width="26" height="26" viewBox="0 0 30 28" fill="none" stroke="#3b3a39" strokeWidth="1.800">
          <circle cx="18" cy="11" r="10" />
          <path d="M11 18L1 27" />
        </svg>
        <span className="ml-[11px]">Search</span>
      </div>
      <div className="mt-[10px] h-[2px] bg-[#e1dfdd]" />
      <div className="mt-[21px] flex h-[34px] items-center text-[19px] text-[#323130]">
        <ChevronRight size={26} strokeWidth={1.3} className="ml-[11px] text-[#3b3a39]" />
        <svg className="ml-[4px]" width="23" height="22" viewBox="0 0 23 22" fill="none" stroke="#252423" strokeWidth="1.500">
          <rect x="1" y="1" width="21" height="20" />
          <path d="M1 5H22M1 10H22M1 15.500H22M8 5V21M15 5V21" />
        </svg>
        <span className="ml-[11px]">Alerts</span>
      </div>
    </div>
  )
}

function FilterPane() {
  return (
    <div className="flex w-[58px] flex-col items-center border-l border-[#6b6a69] bg-[#3b3a39] text-white">
      <ChevronLeft size={30} strokeWidth={1.6} className="mt-[24px] text-[#e6e6e6]" />
      <svg className="mt-[57px]" width="20" height="22" viewBox="0 0 20 22" fill="none" stroke="#d6d6d6" strokeWidth="1.500">
        <path d="M19 1V21L12 13H1L19 1Z" />
      </svg>
      <div className="mt-[20px] text-[25px] font-semibold leading-[28px] [writing-mode:vertical-rl]">Filters</div>
    </div>
  )
}

export default function App() {
  return (
    <div className={`flex h-[2075px] w-[3239px] flex-col overflow-hidden bg-[#f3f2f1] ${FONT}`}>
      <TitleBar />
      <Ribbon />
      <div className="flex h-[1753px] border-b-2 border-[#e1dfdd]">
        <div className="w-[72px] shrink-0 border-r-2 border-[#e5e3e1] pt-[1px]">
          <div className="relative flex h-[70px] items-center justify-center">
            <span className="absolute left-0 top-0 h-[70px] w-[5px] bg-[#f2c811]" />
            <svg width="26" height="26" viewBox="0 0 26 26" fill="none" stroke="#3b3a39" strokeWidth="1.500">
              <path d="M1 0V25H25" />
              <rect x="5" y="7" width="4" height="15" />
              <rect x="12" y="13" width="4" height="9" />
              <rect x="19" y="3" width="4" height="19" />
            </svg>
          </div>
          <div className="mt-[17px] flex justify-center">
            <svg width="32" height="32" viewBox="0 0 32 32" fill="none" stroke="#8a8886" strokeWidth="1.800">
              <rect x="1" y="11" width="14" height="12" />
              <path d="M1 17H15" />
              <rect x="18" y="1" width="13" height="11" />
              <path d="M18 6H31" />
              <rect x="18" y="18" width="13" height="13" />
              <path d="M18 24H31M15 8H18M8 11V8H15M8 23V27H18" />
            </svg>
          </div>
        </div>
        <div className="flex w-[2536px] shrink-0 flex-col">
          <div className="flex h-[1692px]">
            <div className="w-[2478px]">
              <Canvas />
              <div className="h-[299px] bg-[linear-gradient(#7a7a7a,#3b3b3b_20px)]" />
            </div>
            <FilterPane />
          </div>
          <div className="flex h-[61px]">
            <div className="flex w-[69px] items-center justify-center gap-[22px] pb-[2px] pr-[8px]">
              <svg width="9" height="18" viewBox="0 0 9 18"><path d="M9 0V18L0 9Z" fill="#c8c6c4" /></svg>
              <svg width="9" height="18" viewBox="0 0 9 18"><path d="M0 0V18L9 9Z" fill="#c8c6c4" /></svg>
            </div>
            <div className="flex h-[61px] w-[133px] items-center justify-center border-b-[7px] border-l border-[#f2c811] border-l-[#8a8886] bg-white pt-[4px] text-[20px] font-semibold text-[#252423]">Page 1</div>
            <div className="mt-[3px] flex h-[55px] w-[68px] items-center justify-center bg-[#f2c811]">
              <Plus size={24} strokeWidth={4.5} className="text-[#6e6e6e]" />
            </div>
          </div>
        </div>
        <VisualizationsPane />
        <FieldsPane />
      </div>
      <div className="flex flex-1 items-center justify-between pb-[2px] pl-[10px] pr-[9px] text-[19.900px] text-[#484644]">
        <span>Page 1 of 1</span>
        <span>Connected live to the Power BI dataset: ContosoAutoVehicleAnomalies in mark@mdfteurope.com</span>
      </div>
    </div>
  )
}
